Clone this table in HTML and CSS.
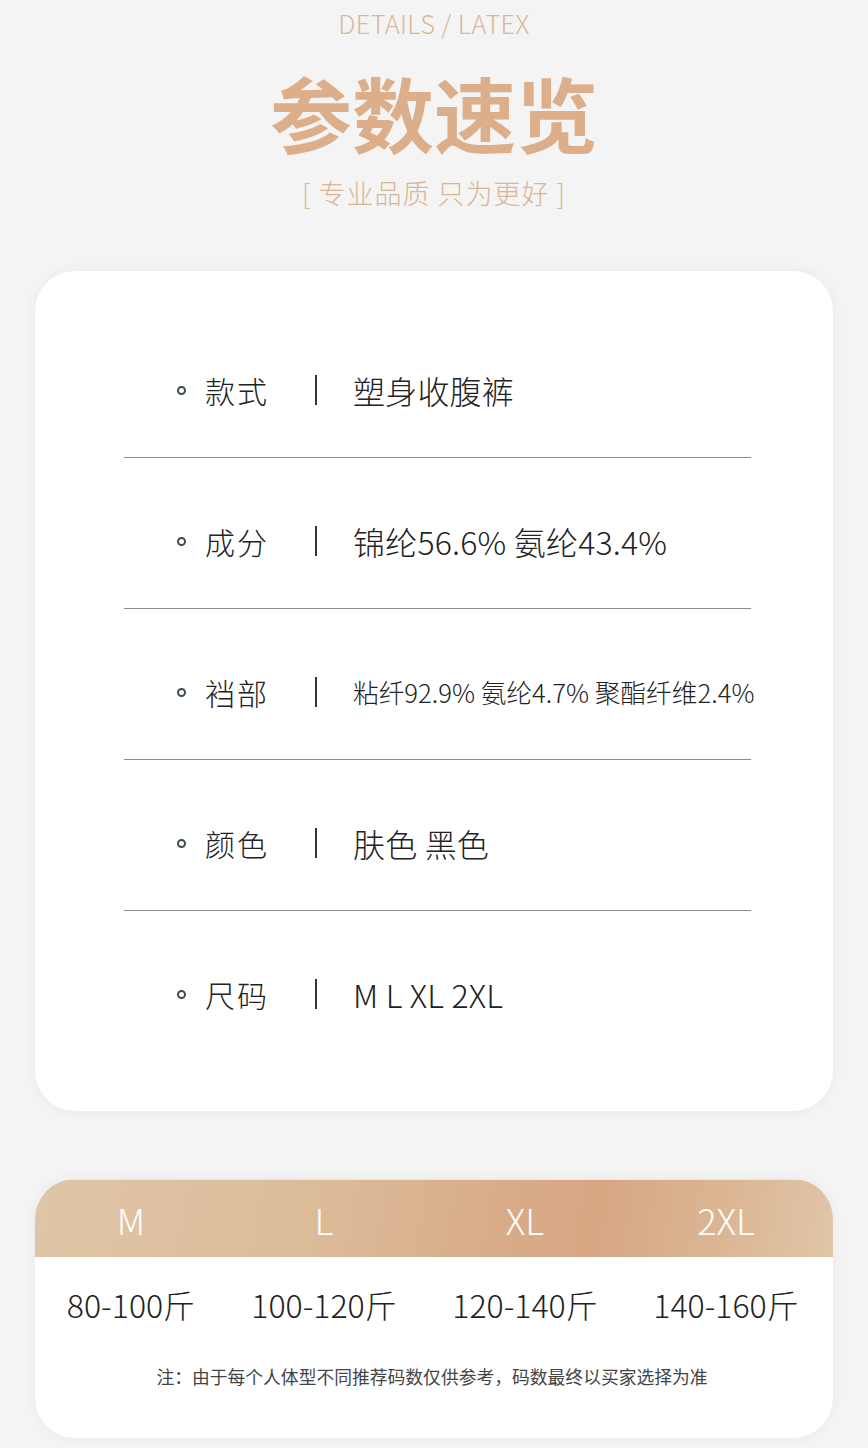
FILE: index.html
```html
<!DOCTYPE html>
<html lang="zh-CN">
<head>
<meta charset="utf-8">
<title>参数速览</title>
<link rel="stylesheet" href="styles.css">
</head>
<body>
<div class="page">
  <header class="head">
    <div class="en">DETAILS / LATEX</div>
    <h1 class="title">参数速览</h1>
    <div class="sub">[ 专业品质 只为更好 ]</div>
  </header>

  <section class="card spec">
    <div class="row"><span class="dot"></span><span class="label">款式</span><span class="bar"></span><span class="value">塑身收腹裤</span></div>
    <div class="row"><span class="dot"></span><span class="label">成分</span><span class="bar"></span><span class="value">锦纶56.6% 氨纶43.4%</span></div>
    <div class="row"><span class="dot"></span><span class="label">裆部</span><span class="bar"></span><span class="value small">粘纤92.9% 氨纶4.7% 聚酯纤维2.4%</span></div>
    <div class="row"><span class="dot"></span><span class="label">颜色</span><span class="bar"></span><span class="value">肤色 黑色</span></div>
    <div class="row"><span class="dot"></span><span class="label">尺码</span><span class="bar"></span><span class="value">M L XL 2XL</span></div>
  </section>

  <section class="card size">
    <div class="size-head">
      <span>M</span><span>L</span><span>XL</span><span>2XL</span>
    </div>
    <div class="size-vals">
      <span>80-100斤</span><span>100-120斤</span><span>120-140斤</span><span>140-160斤</span>
    </div>
    <p class="note">注：由于每个人体型不同推荐码数仅供参考，码数最终以买家选择为准</p>
  </section>
</div>
</body>
</html>
```
FILE: styles.css
```css
html, body {
  margin: 0;
  padding: 0;
  background: #f4f4f4;
}
body {
  font-family: "Noto Sans CJK SC", "Noto Sans", sans-serif;
  color: #222;
}
.page {
  width: 868px;
  height: 1448px;
  overflow: hidden;
}
.head {
  text-align: center;
}
.en {
  padding-top: 8px;
  font-size: 25.5px;
  line-height: 30px;
  font-weight: 300;
  color: #d8b99c;
  letter-spacing: 0.3px;
}
.title {
  margin: 33px 0 0;
  font-size: 82px;
  line-height: 82px;
  font-weight: 700;
  color: #dcaf8a;
}
.sub {
  margin-top: 25px;
  font-size: 27px;
  line-height: 30px;
  font-weight: 300;
  color: #d9b496;
  letter-spacing: 1px;
}
.card {
  background: #fff;
  margin: 0 35px;
  border-radius: 40px;
  box-shadow: 0 0 14px rgba(0, 0, 0, 0.05);
}
.spec {
  margin-top: 63px;
  padding: 36px 0 50px;
}
.row {
  margin: 0 82px 0 89px;
  padding: 68px 0 52px 53px;
  height: 30px;
  display: flex;
  align-items: center;
  border-bottom: 1px solid #8a8a8a;
}
.row:last-child {
  border-bottom: none;
}
.dot {
  width: 5px;
  height: 5px;
  border: 2px solid #3e4d48;
  border-radius: 50%;
  flex: none;
}
.label {
  margin-left: 19px;
  width: 110px;
  flex: none;
  font-size: 30px;
  line-height: 30px;
  font-weight: 300;
  color: #222;
  letter-spacing: 2px;
}
.bar {
  width: 2px;
  height: 30px;
  background: #333;
  flex: none;
}
.value {
  margin-left: 36px;
  flex: none;
  font-size: 32px;
  line-height: 30px;
  font-weight: 300;
  color: #222;
  white-space: nowrap;
  letter-spacing: 0.2px;
}
.value.small {
  font-size: 25.7px;
  letter-spacing: 0;
}
.size {
  margin-top: 68px;
  padding-bottom: 50px;
  overflow: hidden;
}
.size-head {
  height: 77px;
  display: grid;
  grid-template-columns: 192px 194px 208px 194px;
  align-items: center;
  background: linear-gradient(100deg, #dfc6a8 0%, #dcbb99 35%, #d8ab88 60%, #d7a784 70%, #dbb592 85%, #e0c6a8 100%);
  border-top: 1px solid #f3e6d8;
}
.size-head span {
  text-align: center;
  color: #fff;
  font-size: 36px;
  line-height: 40px;
  font-weight: 300;
}
.size-vals {
  display: grid;
  grid-template-columns: 192px 194px 208px 194px;
  padding-top: 29px;
}
.size-vals span {
  text-align: center;
  font-size: 32px;
  line-height: 36px;
  font-weight: 300;
  color: #222;
}
.note {
  margin: 42px 0 0;
  text-align: center;
  font-size: 17.8px;
  line-height: 24px;
  color: #444;
  padding-right: 4px;
}
```
